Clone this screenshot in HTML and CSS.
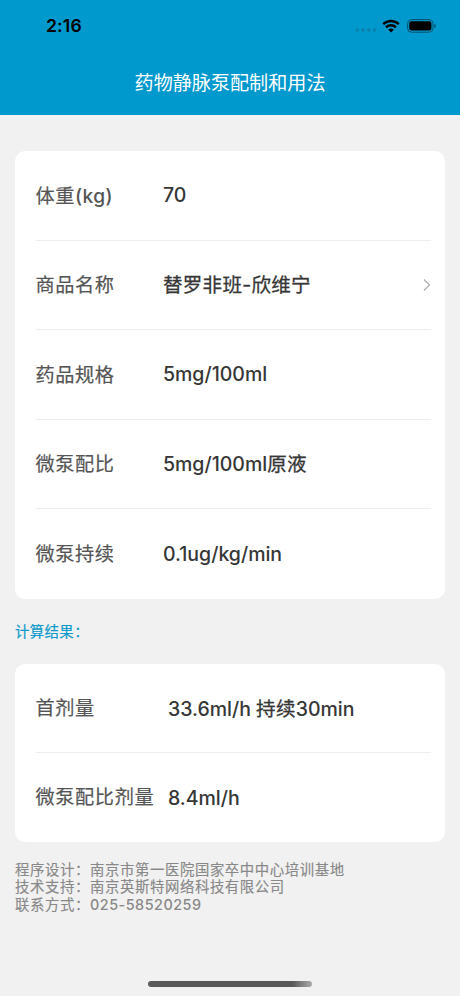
FILE: index.html
```html
<!DOCTYPE html>
<html lang="zh-CN">
<head>
    <meta charset="UTF-8">
    <meta name="viewport" content="width=device-width, initial-scale=1.0">
    <title>药物静脉泵配制和用法</title>
    <link rel="stylesheet" href="styles.css">
</head>
<body>
    <header class="header">
        <div class="status-bar">
            <span class="time">2:16</span>
            <div class="status-icons">
                <svg class="signal" width="22" height="4" viewBox="0 0 22 4">
                    <circle cx="2.3" cy="2" r="1.8"/>
                    <circle cx="8" cy="2" r="1.8"/>
                    <circle cx="13.7" cy="2" r="1.8"/>
                    <circle cx="19.4" cy="2" r="1.8"/>
                </svg>
                <svg class="wifi" width="18" height="14" viewBox="0 0 18 14">
                    <path d="M1.2 5.1a11.2 11.2 0 0 1 15.6 0M4 8.3a7.2 7.2 0 0 1 10 0" fill="none" stroke="#000" stroke-width="2.4"/>
                    <path d="M9 13.6 6.2 10.8a4 4 0 0 1 5.6 0z"/>
                </svg>
                <svg class="battery" width="30" height="14" viewBox="0 0 30 14">
                    <rect x="0.6" y="0.6" width="25.4" height="12.6" rx="4" fill="none" stroke="#02506d"/>
                    <rect x="2.2" y="2.2" width="22.2" height="9.4" rx="2.4"/>
                    <path d="M27.3 4.8q1.6.7 1.6 2.1t-1.6 2.1z" fill="#02506d"/>
                </svg>
            </div>
        </div>
        <h1 class="title">药物静脉泵配制和用法</h1>
    </header>

    <main class="content">
        <div class="card form-card">
            <div class="row">
                <span class="label">体重<span class="unit">(kg)</span></span>
                <span class="value">70</span>
            </div>
            <div class="row">
                <span class="label">商品名称</span>
                <span class="value"><span class="cn">替罗非班-欣维宁</span></span>
                <svg class="arrow" width="9" height="14" viewBox="0 0 9 14">
                    <path d="M1.9 1.5 7.5 7l-5.6 5.5" fill="none" stroke="#aaa" stroke-width="1.1"/>
                </svg>
            </div>
            <div class="row">
                <span class="label">药品规格</span>
                <span class="value">5mg/100ml</span>
            </div>
            <div class="row">
                <span class="label">微泵配比</span>
                <span class="value">5mg/100ml<span class="cn">原液</span></span>
            </div>
            <div class="row">
                <span class="label">微泵持续</span>
                <span class="value">0.1ug/kg/min</span>
            </div>
        </div>

        <h2 class="result-title">计算结果：</h2>

        <div class="card result-card">
            <div class="row">
                <span class="label">首剂量</span>
                <span class="value">33.6ml/h <span class="cn">持续</span>30min</span>
            </div>
            <div class="row">
                <span class="label">微泵配比剂量</span>
                <span class="value">8.4ml/h</span>
            </div>
        </div>

        <footer class="footer">
            <p>程序设计：南京市第一医院国家卒中中心培训基地</p>
            <p>技术支持：南京英斯特网络科技有限公司</p>
            <p>联系方式：<span class="phone">025-58520259</span></p>
        </footer>
    </main>

    <div class="home-indicator"></div>
</body>
</html>
```
FILE: styles.css
```css
* {
  box-sizing: border-box;
}

body {
  font-family: Inter, "Noto Sans CJK SC", sans-serif;
  margin: 0;
  height: 996px;
  display: flex;
  flex-direction: column;
  background-color: #f1f1f1;
  color: #363636;
}

.header {
  height: 115px;
  background-color: #0099cd;
}

.status-bar {
  display: flex;
  justify-content: space-between;
  height: 51px;
  padding: 0 23px 0 46px;
  align-items: center;
}

.time {
  font-size: 17.6px;
  font-weight: 600;
  letter-spacing: 0.15px;
  color: #000;
}

.status-icons {
  display: flex;
  align-items: center;
}

.signal {
  fill: #0780aa;
  margin: 9px 5px 0 0;
}

.wifi {
  margin-right: 7px;
}

.title {
  margin: 17px 0 0;
  font-size: 19.1px;
  font-weight: 400;
  line-height: 30px;
  text-align: center;
  color: #fff;
}

.content {
  padding: 36px 15px 0;
}

.card {
  background-color: #fff;
  border-radius: 10px;
  padding: 0 14px 0 20.5px;
}

.row {
  display: flex;
  align-items: center;
  height: 89.5px;
  border-bottom: 1px solid #eee;
}

.row:last-child {
  border-bottom: none;
}

.label {
  width: 127.5px;
  padding-bottom: 1px;
  font-size: 19.2px;
  letter-spacing: 0.6px;
  color: #555;
  white-space: nowrap;
  -webkit-text-stroke: 0.2px #555;
}

.unit {
  font-weight: 500;
  letter-spacing: 0.4px;
  -webkit-text-stroke: 0;
}

.value {
  flex: 1;
  font-size: 19.5px;
  font-weight: 500;
  line-height: 28px;
}

/* medium weight for the Chinese part of a value */
.cn {
  font-weight: 400;
  letter-spacing: 0.3px;
  -webkit-text-stroke: 0.3px #363636;
}

.result-title {
  margin: 22px 0 0;
  font-size: 14.4px;
  font-weight: 400;
  letter-spacing: 0.4px;
  line-height: 22px;
  color: #0e9acb;
  -webkit-text-stroke: 0.2px #0e9acb;
}

.result-card {
  margin-top: 21px;
}

.result-card .row {
  height: 89px;
}

.result-card .label {
  width: 132.5px;
  padding-bottom: 2px;
}

.result-card .value {
  padding-top: 2px;
}

.footer {
  margin-top: 19px;
  font-size: 14.4px;
  letter-spacing: 0.6px;
  line-height: 17.5px;
  color: #888;
  -webkit-text-stroke: 0.15px #888;
}

.footer p {
  margin: 0;
}

.phone {
  font-weight: 500;
  letter-spacing: 0.5px;
  -webkit-text-stroke: 0;
}

.home-indicator {
  width: 164px;
  height: 6px;
  margin: auto auto 9px;
  border-radius: 3px;
  background: linear-gradient(to right, #595959 88%, #aaa);
}
```
